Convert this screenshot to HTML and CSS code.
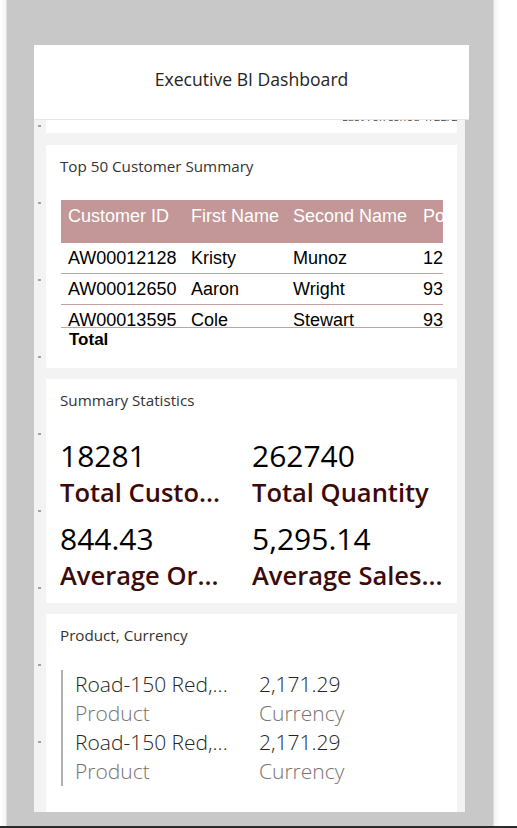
FILE: index.html
```html
<!DOCTYPE html>
<html>
<head>
<meta charset="utf-8">
<link rel="stylesheet" href="styles.css">
</head>
<body>
<div class="stage">
  <div class="canvas">
    <div class="phone">
      <div class="header">Executive BI Dashboard</div>
      <div class="scroll">
        <div class="card card-peek"><span class="peek-text">Last refreshed 1/22/2024 9:41 AM</span></div>
        <div class="card card-table">
          <div class="card-title">Top 50 Customer Summary</div>
          <div class="table">
            <div class="thead">
              <div class="c c1">Customer ID</div>
              <div class="c c2">First Name</div>
              <div class="c c3">Second Name</div>
              <div class="c c4">Postal Code</div>
            </div>
            <div class="tbody">
              <div class="tr">
                <div class="c c1">AW00012128</div>
                <div class="c c2">Kristy</div>
                <div class="c c3">Munoz</div>
                <div class="c c4">1214</div>
              </div>
              <div class="tr">
                <div class="c c1">AW00012650</div>
                <div class="c c2">Aaron</div>
                <div class="c c3">Wright</div>
                <div class="c c4">9320</div>
              </div>
              <div class="tr">
                <div class="c c1">AW00013595</div>
                <div class="c c2">Cole</div>
                <div class="c c3">Stewart</div>
                <div class="c c4">9320</div>
              </div>
            </div>
            <div class="tfoot">Total</div>
          </div>
        </div>
        <div class="card card-stats">
          <div class="card-title">Summary Statistics</div>
          <div class="stats">
            <div class="stat"><div class="val">18281</div><div class="lbl">Total Custo...</div></div>
            <div class="stat"><div class="val">262740</div><div class="lbl">Total Quantity</div></div>
            <div class="stat"><div class="val">844.43</div><div class="lbl">Average Or...</div></div>
            <div class="stat"><div class="val">5,295.14</div><div class="lbl">Average Sales...</div></div>
          </div>
        </div>
        <div class="card card-list">
          <div class="card-title">Product, Currency</div>
          <div class="mrow">
            <div class="mcol">
              <div class="mval">Road-150 Red,...</div>
              <div class="mlbl">Product</div>
              <div class="mval">Road-150 Red,...</div>
              <div class="mlbl">Product</div>
            </div>
            <div class="mcol">
              <div class="mval">2,171.29</div>
              <div class="mlbl">Currency</div>
              <div class="mval">2,171.29</div>
              <div class="mlbl">Currency</div>
            </div>
          </div>
        </div>
      </div>
    </div>
  </div>
</div>
</body>
</html>
```
FILE: styles.css
```css
html, body {
  margin: 0;
  padding: 0;
}
body {
  width: 517px;
  height: 828px;
  background: #ffffff;
  overflow: hidden;
  font-family: "Open Sans", "Noto Sans", sans-serif;
}
.stage {
  height: 826px;
  border-bottom: 2px solid #2b2b2b;
  background: linear-gradient(to right, #ffffff 0, #f4f4f4 6px, #c8c8c8 7px, #c8c8c8 493px, #f2f2f2 494px, #ffffff 500px);
}
.canvas {
  width: 486px;
  height: 826px;
  margin-left: 7px;
  padding-top: 45px;
  box-sizing: border-box;
}
.phone {
  width: 435px;
  margin-left: 27px;
}
.header {
  height: 75px;
  background: #ffffff;
  border-bottom: 1px solid #e6e6e6;
  box-sizing: border-box;
  display: flex;
  align-items: center;
  justify-content: center;
  font-size: 17.6px;
  color: #252423;
  padding-bottom: 7px;
}
.scroll {
  width: 432px;
  height: 692px;
  background: #f3f3f3 repeating-linear-gradient(to bottom, transparent 0 5px, #a3a3a3 5px 7px, transparent 7px 77px) 4px 0 / 3px 100% no-repeat;
  border-right: 1px solid #c4c4c4;
  padding-left: 12px;
  box-sizing: border-box;
  display: flex;
  flex-direction: column;
  gap: 11px;
  overflow: hidden;
}
.card {
  width: 411px;
  background: #ffffff;
  box-sizing: border-box;
  padding: 11px 14px 0 14px;
  flex-shrink: 0;
}
.card-peek {
  height: 13px;
  margin-bottom: 1px;
  padding: 0;
  overflow: hidden;
}
.peek-text {
  display: block;
  margin-top: -9px;
  margin-left: 296px;
  font-size: 11px;
  line-height: 12px;
  color: #444;
  letter-spacing: 0.3px;
  white-space: nowrap;
}
.card-title {
  font-size: 15.2px;
  line-height: 20px;
  color: #333333;
}
.card-table {
  height: 223px;
}
.table {
  margin-top: 24px;
  margin-left: 1px;
  width: 382px;
  overflow: hidden;
  font-family: "Liberation Sans", Arial, sans-serif;
  font-size: 18px;
}
.thead, .tr {
  display: flex;
  white-space: nowrap;
}
.thead {
  height: 43px;
  background: #c39797;
  color: #ffffff;
  line-height: 32px;
}
.tbody {
  height: 84px;
  overflow: hidden;
  border-bottom: 1px solid #c9a0a0;
}
.tr {
  height: 30px;
  line-height: 30px;
  border-bottom: 1px solid #c9a0a0;
  color: #000000;
}
.c {
  flex-shrink: 0;
  padding-left: 7px;
  box-sizing: border-box;
}
.c1 { width: 123px; }
.c2 { width: 102px; }
.c3 { width: 130px; }
.c4 { width: 80px; }
.tfoot {
  padding-left: 8px;
  font-weight: bold;
  font-size: 17px;
  line-height: 24px;
  color: #000;
}
.card-stats {
  height: 224px;
}
.stats {
  margin-top: 28px;
  display: grid;
  grid-template-columns: 192px 190px;
  row-gap: 11px;
}
.stat {
  white-space: nowrap;
  overflow: hidden;
}
.val {
  font-size: 30px;
  line-height: 36px;
  color: #000000;
}
.lbl {
  font-size: 25.5px;
  line-height: 36px;
  font-weight: 600;
  color: #3b0a0a;
}
.card-list {
  height: 198px;
}
.mrow {
  margin-top: 25px;
  margin-left: 1px;
  border-left: 2px solid #b3b0ad;
  padding-left: 12px;
  display: flex;
}
.mcol {
  display: flex;
  flex-direction: column;
}
.mcol:first-child {
  width: 184px;
}
.mval, .mlbl {
  font-size: 21px;
  line-height: 29px;
  font-weight: 300;
  white-space: nowrap;
}
.mval { color: #252423; }
.mlbl { color: #767370; }
```
